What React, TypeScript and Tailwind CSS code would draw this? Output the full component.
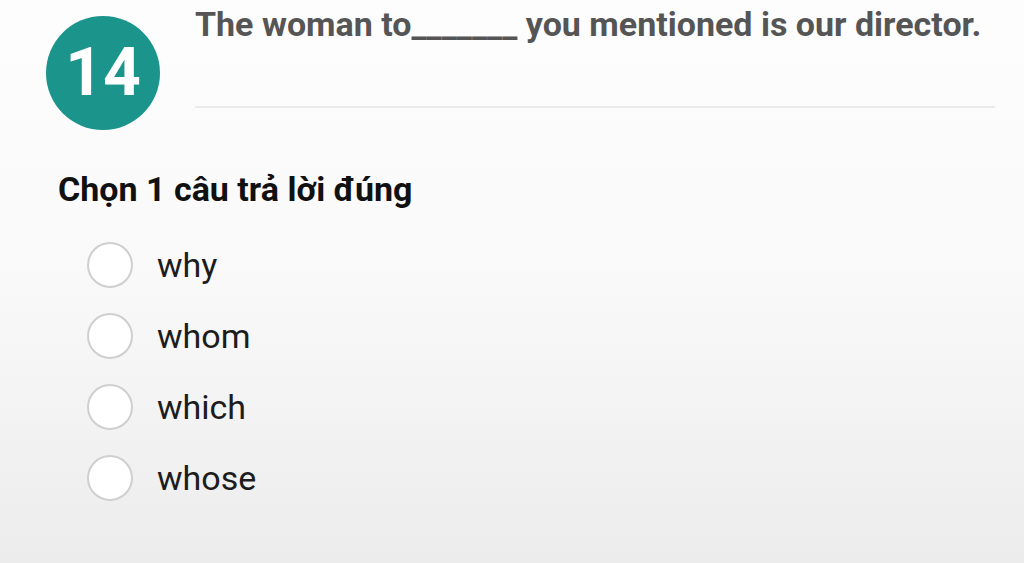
import { useState } from "react";

const options = ["why", "whom", "which", "whose"];

export default function App() {
  const [picked, setPicked] = useState<string | null>(null);

  return (
    <div
      className="w-[1024px] h-[563px] overflow-hidden bg-gradient-to-b from-[#fdfdfd] via-[#f9f9f9] to-[#ececec]"
      style={{ fontFamily: "Roboto, 'Liberation Sans', sans-serif" }}
    >
      <div className="flex pl-[46px] pt-[16px] pr-[29px]">
        <div className="w-[114px] h-[114px] shrink-0 rounded-full bg-[#1b948c] flex items-center justify-center text-white font-bold text-[66px] leading-none">
          14
        </div>
        <div className="flex-1 ml-[35px] -mt-[16px]">
          <p className="text-[34px] font-bold text-[#555] leading-[48px] whitespace-nowrap">
            The woman to_______ you mentioned is our director.
          </p>
          <div className="mt-[58px] h-[2px] bg-[#ebebeb]" />
        </div>
      </div>

      <h2 className="ml-[58px] mt-[42px] text-[34px] font-bold text-[#111] leading-none">
        Chọn 1 câu trả lời đúng
      </h2>

      <div className="mt-[36px] ml-[87px] flex flex-col gap-[25px]">
        {options.map((opt) => (
          <label key={opt} className="flex items-center gap-[24px] cursor-pointer" onClick={() => setPicked(opt)}>
            <span className="w-[46px] h-[46px] rounded-full border-2 border-[#cfcfcf] bg-white flex items-center justify-center">
              {picked === opt ? <span className="w-[24px] h-[24px] rounded-full bg-[#1b948c]" /> : null}
            </span>
            <span className="text-[34px] text-[#1c1c1c] leading-none">{opt}</span>
          </label>
        ))}
      </div>
    </div>
  );
}
